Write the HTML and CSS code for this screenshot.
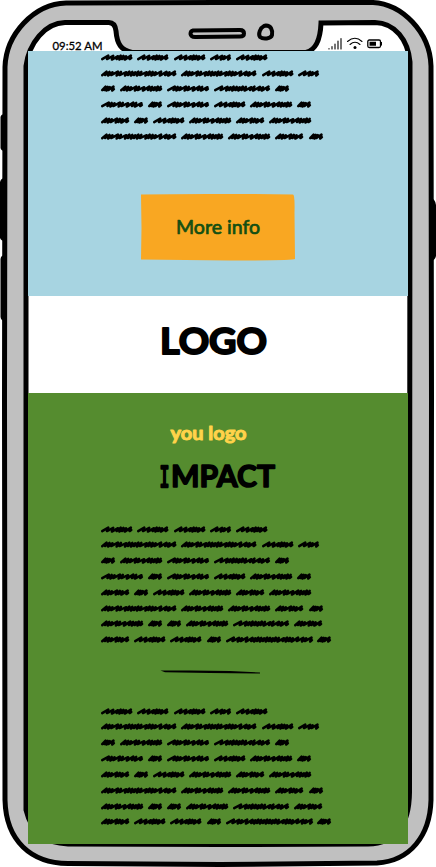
FILE: index.html
```html
<!DOCTYPE html>
<html lang="en">
<head>
<meta charset="utf-8">
<title>Mobile wireframe</title>
<link rel="stylesheet" href="styles.css">
</head>
<body>
<main class="phone">
  <svg class="frame" viewBox="0 0 436 867" aria-hidden="true">
    <path d="M5 114Q1 114 .500 117V148Q1 151 5 151ZM5 178Q1 178 0 182V238Q1 241 5 241ZM5 255Q1 255 .500 259V317Q1 321 5 321ZM430 198Q435 198 436 205V256Q435 261 430 261Z"/>
    <path class="shell" d="M5 67C6 34 34 4 66 3L217 2.500L373 2.500C402 4 430 32 431 66L431.500 400L431 800C430 836 410 861 377 863L220 864.500L68 863.500C31 863 6 841 5 800L4.500 400Z"/>
    <path class="screen" d="M26 66C29 43 45 23 65 22.500L108 22.500Q115 22 116 31C117 44 121 50 132 52.500H306Q320 49 321 23L375 22.500C395 23 408 40 410 62L409.500 792Q409 843 368 844L220 844.500L68 844Q34 843 26 810Z"/>
    <path class="line" d="M193 30.500Q190.500 31 190.500 34Q191 37 195 37L240 36.500Q244 36.500 244 33.500Q244 30 240 30Z"/>
    <path class="line" d="M264 26C260 28 258 34 260 37C263 39.500 271 39 272 35Q273 26 266 25.500Z"/>
  </svg>
  <header class="status">
    <svg class="clock" viewBox="0 0 54 16"><text x="0.500" y="13.500" textLength="50" lengthAdjust="spacingAndGlyphs">09:52 AM</text></svg>
    <svg class="signals" viewBox="0 0 56 16" aria-hidden="true">
      <path class="thin" d="M1 13V12.500M4 13V10.500M7 13V8M10 13V5M13 13V2.500"/>
      <path class="thin" d="M19.500 5.500Q27 -1 34 5.500M22 8.500Q27 4 32 8.500"/>
      <circle cx="27" cy="11.500" r="1.500"/>
      <rect class="case" x="39.800" y="4" width="12.700" height="7.500" rx="1.500"/>
      <path d="M41.500 5.800H48V9.800H41.500ZM53 6H54V9.500H53Z"/>
    </svg>
  </header>
  <section class="intro">
    <div class="scribble" data-lines="6"></div>
    <button class="more" type="button">
      <svg class="plate" viewBox="0 0 156 68" preserveAspectRatio="none" aria-hidden="true"><path d="M1 1.500Q60 .300 153 1.500Q155 1.500 154.500 20L155 66Q154 67.500 90 67.500L1 66.500L1.500 35Z"/></svg>
      <svg class="label" viewBox="0 0 90 30"><text x="1" y="21.500" textLength="84" lengthAdjust="spacingAndGlyphs">More info</text></svg>
    </button>
  </section>
  <section class="brand">
    <svg viewBox="0 0 116 40"><text x="1" y="32.500" textLength="107" lengthAdjust="spacingAndGlyphs">LOGO</text></svg>
  </section>
  <section class="impact">
    <svg class="tag" viewBox="0 0 84 26"><text x="1.500" y="18" textLength="76" lengthAdjust="spacingAndGlyphs">you logo</text></svg>
    <svg class="title" viewBox="0 0 124 34"><text y="27"><tspan class="slab" x="-.500" textLength="10" lengthAdjust="spacingAndGlyphs">I</tspan><tspan x="11" textLength="104" lengthAdjust="spacingAndGlyphs">MPACT</tspan></text></svg>
    <div class="scribble" data-lines="8"></div>
    <svg class="rule" viewBox="0 0 102 5" aria-hidden="true"><path d="M.500 .500L30 .600L70 1.100L100 2.500L100 3.500L50 3L5 2.300Z"/></svg>
    <div class="scribble" data-lines="8"></div>
  </section>
</main>
<script src="scribble.js"></script>
</body>
</html>
```
FILE: styles.css
```css
* { box-sizing: border-box; }

body {
  margin: 0;
  background: #fff;
  font-family: Lato, "Liberation Sans", sans-serif;
}

svg { display: block; overflow: visible; }

.phone {
  position: relative;
  display: grid;
  grid-template-rows: 51px 245px 96.5px 451.5px;
  width: 436px;
  height: 867px;
  padding: 0 28.3px;
  overflow: hidden;
}

.frame {
  position: absolute;
  inset: 0;
  width: 436px;
  height: 867px;
}

.shell { fill: #c0c0c0; stroke: #000; stroke-width: 5; }
.screen { fill: #fff; stroke: #000; stroke-width: 5; }
.line { fill: none; stroke: #000; stroke-width: 4; stroke-linejoin: round; }

.status {
  position: relative;
  display: flex;
  justify-content: space-between;
  padding: 36px 23.7px 0;
}

.clock { width: 54px; height: 16px; font-size: 12px; }
.clock text { stroke: #000; stroke-width: .3; }
.signals { width: 56px; height: 16px; }
.thin { fill: none; stroke: #000; stroke-width: 1.1; stroke-linecap: round; }
.case { fill: none; stroke: #000; stroke-width: 1.3; }

.intro,
.impact {
  position: relative;
  display: flex;
  flex-direction: column;
  padding-left: 72.7px;
}

.intro { background: #a7d4e1; padding-top: 1.7px; }
.impact { background: #558c2f; padding-top: 29px; width: 379.5px; }

.scribble { display: grid; grid-auto-rows: 15.83px; }
.row { display: flex; gap: 4.9px; }
.word { height: 9px; flex: none; }
.word path {
  fill: none;
  stroke: #000;
  stroke-width: 2.5;
  stroke-linejoin: round;
  stroke-linecap: round;
}

.more {
  display: grid;
  place-items: center;
  width: 156px;
  height: 68px;
  margin: 45.5px 0 0 39.5px;
  padding: 0;
  border: 0;
  background: none;
  color: #134f12;
  font: inherit;
}

.more > * { grid-area: 1 / 1; }
.plate { width: 156px; height: 68px; fill: #f9a722; }
.label { width: 90px; height: 30px; margin-left: 3px; font-size: 19px; }
.label text { fill: #134f12; stroke: #134f12; stroke-width: .7; stroke-linejoin: round; }

.brand {
  position: relative;
  padding: 25px 0 0 131px;
}

.brand svg {
  width: 116px;
  height: 40px;
  font-size: 37px;
  font-weight: 700;
}

.brand text { stroke: #000; stroke-width: 2; stroke-linejoin: round; }

.tag {
  width: 84px;
  height: 26px;
  margin-left: 68.5px;
  font-size: 19px;
  font-weight: 700;
}

.tag text { fill: #ffd34a; stroke: #ffd34a; stroke-width: 1; stroke-linejoin: round; }

.title {
  width: 124px;
  height: 34px;
  margin: 12px 0 31px 59px;
  font-size: 30px;
  font-weight: 700;
}

.title text { stroke: #000; stroke-width: 1.5; stroke-linejoin: round; }
.title .slab { font-family: "DejaVu Sans Mono", monospace; font-size: 29px; font-weight: 400; stroke-width: 2.5; }

.rule { width: 102px; height: 5px; margin: 19px 0 31.5px 59px; }
```
FILE: scribble.js
```js
// Placeholder words: each row lists word kinds, each kind has a width and
// a rhythm of wide (w) and tight (t) pen strokes.
const kinds = {
  A: [14, "tttw"],
  B: [21, "wwtw"],
  C: [28.2, "tttwttw"],
  D: [31.4, "wwwtttw"],
  E: [42.2, "tttwtwwtttt"],
  F: [42, "wttwtwwtw"],
  G: [56, "wwttttttwtwtw"],
  H: [75.4, "tttwtwtttttwtttwwtw"],
  I: [87, "wwtwwtttttttttwtttwwtw"]
};
const rows = ["DDDBD", "HHDB", "AEFGA", "FAFDEA", "CADECE", "HEECA", "EAAEGC", "CDDAIA"];

function word(kind) {
  const [width, rhythm] = kinds[kind];
  const total = [...rhythm].reduce((sum, s) => sum + (s === "w" ? 1.8 : 1), 0);
  const unit = (width - 4) / total;
  let x = 1.2;
  let d = `M${x} 6.2`;
  [...rhythm].forEach((s, i) => {
    const step = unit * (s === "w" ? 1.8 : 1);
    const top = 2.6 + (i % 3) * 0.3;
    const low = 6.1 + (i % 2) * 0.5;
    const up = x + step + 1.3;
    d += `L${up.toFixed(1)} ${top.toFixed(1)}L${(x + step).toFixed(1)} ${low}`;
    x += step;
  });
  d += `L${(width - 1.1).toFixed(1)} 5`;
  return `<svg class="word" width="${width}" height="9" viewBox="0 0 ${width} 9" aria-hidden="true"><path d="${d}"/></svg>`;
}

document.querySelectorAll(".scribble").forEach((block) => {
  block.innerHTML = rows
    .slice(0, Number(block.dataset.lines))
    .map((row) => `<div class="row">${[...row].map(word).join("")}</div>`)
    .join("");
});
```
